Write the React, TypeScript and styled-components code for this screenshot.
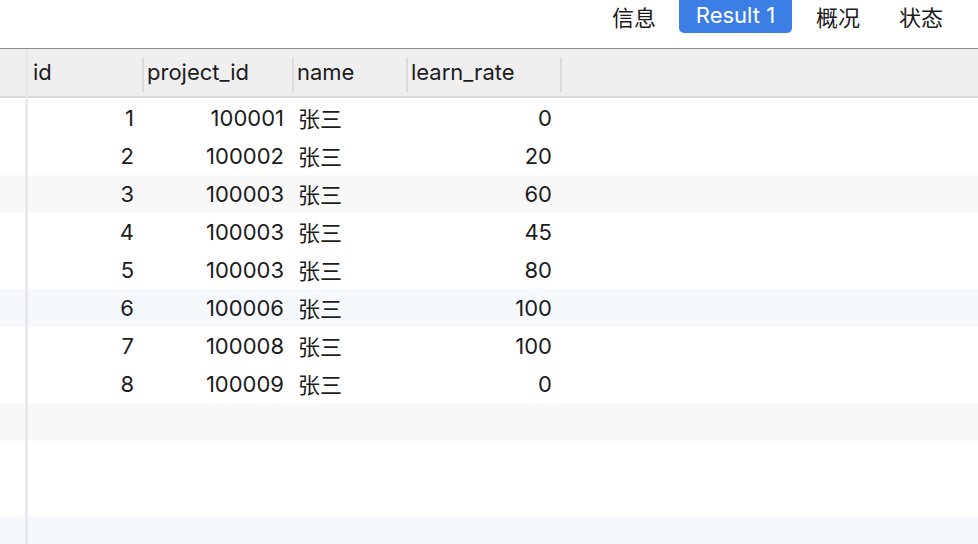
import React from "react";
import styled, { createGlobalStyle } from "styled-components";

const GlobalStyle = createGlobalStyle`
  html, body {
    margin: 0;
    padding: 0;
    background: #ffffff;
    overflow: hidden;
  }
  body {
    font-family: Inter, "Liberation Sans", "Noto Sans CJK SC", sans-serif;
    color: #1f1f1f;
  }
`;

const Page = styled.div`
  width: 978px;
  height: 544px;
  overflow: hidden;
  display: flex;
  flex-direction: column;
`;

const TabBar = styled.div`
  height: 49px;
  flex: 0 0 49px;
  display: flex;
  justify-content: flex-end;
  align-items: flex-start;
  padding-right: 35px;
  border-bottom: 1px solid #8e8e8e;
  box-sizing: border-box;
`;

const Tab = styled.div<{ $gap: number }>`
  margin-left: ${(p) => p.$gap}px;
  height: 33px;
  line-height: 32px;
  font-size: 22px;
  font-family: "Noto Sans CJK SC", Inter, sans-serif;
  color: #1a1a1a;
`;

const ActiveTab = styled.div<{ $gap: number }>`
  margin-left: ${(p) => p.$gap}px;
  width: 113px;
  height: 33px;
  line-height: 31px;
  text-align: center;
  border-radius: 0 0 5px 5px;
  background: #3b7fe6;
  color: #ffffff;
  font-family: Inter, "Liberation Sans", sans-serif;
  font-size: 22px;
`;

const Grid = styled.div`
  display: grid;
  grid-template-columns: 28px 114px 150px 114px 154px 1fr;
  grid-template-rows: 50px;
  grid-auto-rows: 38px;
`;

const HeadRow = styled.div`
  display: contents;
`;

const HeadCell = styled.div<{ $sep?: boolean }>`
  position: relative;
  height: 49px;
  background: #efefef;
  border-bottom: 2px solid #d9d9d9;
  box-sizing: border-box;
  display: flex;
  align-items: center;
  padding-left: 5px;
  padding-bottom: 1px;
  font-size: 22px;
  color: #1c1c1c;
  &::before {
    content: "";
    display: ${(p) => (p.$sep ? "block" : "none")};
    position: absolute;
    left: 0;
    top: 8px;
    bottom: 4px;
    width: 2px;
    background: #dcdcdc;
  }
`;

const Gutter = styled.div<{ $stripe?: string; $head?: boolean }>`
  background: ${(p) => p.$stripe || (p.$head ? "#efefef" : "#ffffff")};
  border-right: 3px solid #e9e9e9;
  box-sizing: border-box;
  height: ${(p) => (p.$head ? "49px" : "38px")};
  ${(p) => p.$head && "border-bottom: 2px solid #d9d9d9;"}
`;

const Cell = styled.div<{ $stripe?: string; $align?: "left" | "right" }>`
  background: ${(p) => p.$stripe || "#ffffff"};
  display: flex;
  align-items: center;
  justify-content: ${(p) => (p.$align === "left" ? "flex-start" : "flex-end")};
  padding: ${(p) => (p.$align === "left" ? "0 0 3px 6px" : "0 8px 0 0")};
  font-size: 22px;
  color: #1c1c1c;
  font-family: ${(p) =>
    p.$align === "left"
      ? `"Noto Sans CJK SC", Inter, sans-serif`
      : `Inter, "Liberation Sans", sans-serif`};
  box-sizing: border-box;
`;

const rows = [
  { id: 1, project_id: 100001, name: "张三", learn_rate: 0 },
  { id: 2, project_id: 100002, name: "张三", learn_rate: 20 },
  { id: 3, project_id: 100003, name: "张三", learn_rate: 60 },
  { id: 4, project_id: 100003, name: "张三", learn_rate: 45 },
  { id: 5, project_id: 100003, name: "张三", learn_rate: 80 },
  { id: 6, project_id: 100006, name: "张三", learn_rate: 100 },
  { id: 7, project_id: 100008, name: "张三", learn_rate: 100 },
  { id: 8, project_id: 100009, name: "张三", learn_rate: 0 },
];

// every third row is tinted, alternating grey and blue
const stripeFor = (i: number) => {
  if ((i + 1) % 3 !== 0) return undefined;
  return ((i + 1) / 3) % 2 === 1 ? "#f8f8f8" : "#f5f9fd";
};

export default function App() {
  const all = [...rows, ...Array(4).fill(null)];
  return (
    <Page>
      <GlobalStyle />
      <TabBar>
        <Tab $gap={0}>信息</Tab>
        <ActiveTab $gap={23}>Result 1</ActiveTab>
        <Tab $gap={24}>概况</Tab>
        <Tab $gap={39}>状态</Tab>
      </TabBar>
      <Grid>
        <HeadRow>
          <Gutter $head />
          <HeadCell>id</HeadCell>
          <HeadCell $sep>project_id</HeadCell>
          <HeadCell $sep>name</HeadCell>
          <HeadCell $sep>learn_rate</HeadCell>
          <HeadCell $sep />
        </HeadRow>
        {all.map((r, i) => {
          const s = stripeFor(i);
          return (
            <React.Fragment key={i}>
              <Gutter $stripe={s} />
              <Cell $stripe={s}>{r ? r.id : ""}</Cell>
              <Cell $stripe={s}>{r ? r.project_id : ""}</Cell>
              <Cell $stripe={s} $align="left">
                {r ? r.name : ""}
              </Cell>
              <Cell $stripe={s}>{r ? r.learn_rate : ""}</Cell>
              <Cell $stripe={s} />
            </React.Fragment>
          );
        })}
      </Grid>
    </Page>
  );
}
